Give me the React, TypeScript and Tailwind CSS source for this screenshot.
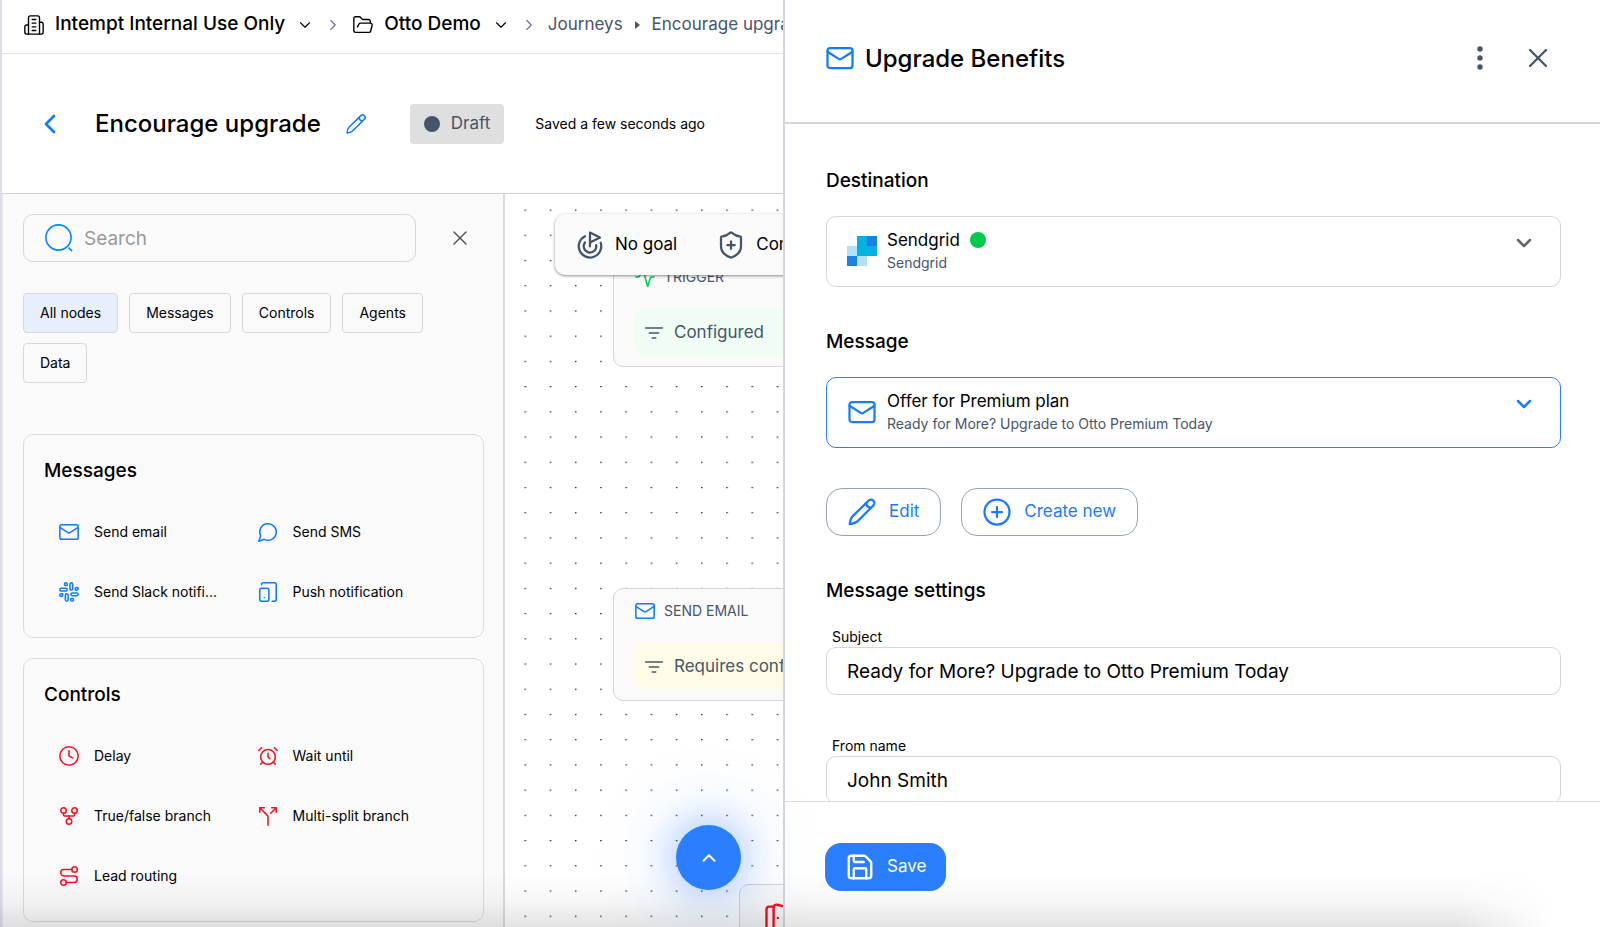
import { useState } from 'react'
import type { ReactNode } from 'react'
import {
  Activity,
  AlarmClock,
  ChevronDown,
  ChevronLeft,
  ChevronRight,
  ChevronUp,
  CirclePlus,
  Clock,
  DoorOpen,
  FolderOpen,
  GitFork,
  Goal,
  Route,
  Save,
  ShieldPlus,
  Slack,
  Split,
  TabletSmartphone,
  X,
} from 'lucide-react'

type IconProps = { size?: number; strokeWidth?: number; className?: string }

function Svg({ size = 24, strokeWidth = 2, className, children }: IconProps & { children: ReactNode }) {
  return (
    <svg
      width={size}
      height={size}
      viewBox="0 0 24 24"
      fill="none"
      stroke="currentColor"
      strokeWidth={strokeWidth}
      strokeLinecap="round"
      strokeLinejoin="round"
      className={className}
      aria-hidden="true"
    >
      {children}
    </svg>
  )
}

const MailIcon = (props: IconProps) => (
  <Svg {...props}>
    <rect width="20" height="16" x="2" y="4" rx="2" />
    <path d="m2 7 8.97 5.7a1.94 1.94 0 0 0 2.06 0L22 7" />
  </Svg>
)

const ChatIcon = (props: IconProps) => (
  <Svg {...props}>
    <path d="M7.9 20A9 9 0 1 0 4 16.1L2 22Z" />
  </Svg>
)

const BuildingIcon = (props: IconProps) => (
  <Svg {...props}>
    <path d="M6 22V4a2 2 0 0 1 2-2h8a2 2 0 0 1 2 2v18Z" />
    <path d="M6 12H4a2 2 0 0 0-2 2v6a2 2 0 0 0 2 2h2" />
    <path d="M18 9h2a2 2 0 0 1 2 2v9a2 2 0 0 1-2 2h-2" />
    <path d="M10 6h4M10 10h4M10 14h4M10 18h4" />
  </Svg>
)

const PencilIcon = (props: IconProps) => (
  <Svg {...props}>
    <path d="M17.3 2.9a2.65 2.65 0 0 1 3.8 3.8L8.6 19.3c-1.4 1.4-3.6 2-6.4 2.5.3-2.9.9-5 2.4-6.5z" />
    <path d="M15.4 4.9c.1 2 1.6 3.6 3.7 3.8" />
  </Svg>
)

const FilterIcon = (props: IconProps) => (
  <Svg {...props}>
    <path d="M2 6h20M6.500 12h11M10 18h4" />
  </Svg>
)

const SearchIcon = () => (
  <svg width="30" height="30" viewBox="0 0 30 30" fill="none" stroke="#0d83ff" strokeWidth="1.6" aria-hidden="true">
    <circle cx="14.500" cy="14.500" r="12.600" />
    <path d="m24.500 24.700 3.600 3.400" />
  </svg>
)

const SendgridLogo = () => (
  <svg width="30" height="30" viewBox="0 0 30 30" aria-hidden="true">
    <path fill="#b3e1f5" d="M0 10h10v10H0zM10 20h10v10H10z" />
    <path fill="#1a82e2" d="M0 20h10v10H0z" />
    <path fill="#00b2e3" d="M10 0h10v10h10v10H10z" />
    <path fill="#1a82e2" d="M20 0h10v10H20z" />
  </svg>
)

const filters = ['All nodes', 'Messages', 'Controls', 'Agents', 'Data']

const nodeGroups = [
  {
    title: 'Messages',
    color: 'text-[#0f7bff]',
    items: [
      { icon: MailIcon, label: 'Send email' },
      { icon: ChatIcon, label: 'Send SMS' },
      { icon: Slack, label: 'Send Slack notifi...' },
      { icon: TabletSmartphone, label: 'Push notification' },
    ],
  },
  {
    title: 'Controls',
    color: 'text-[#fb0f1f]',
    items: [
      { icon: Clock, label: 'Delay' },
      { icon: AlarmClock, label: 'Wait until' },
      { icon: GitFork, label: 'True/false branch' },
      { icon: Split, label: 'Multi-split branch' },
      { icon: Route, label: 'Lead routing' },
    ],
  },
]

function Breadcrumbs() {
  return (
    <nav
      aria-label="Breadcrumb"
      className="flex h-[54px] shrink-0 items-center overflow-hidden border-b border-[#e2e5ec] pb-1 pl-[21px] whitespace-nowrap"
    >
      <button className="flex items-center text-[19px] font-medium">
        <BuildingIcon size={22} strokeWidth={1.5} className="mr-2.5" />
        Intempt Internal Use Only
        <ChevronDown size={18} strokeWidth={1.5} className="ml-[11px]" />
      </button>
      <ChevronRight size={18} strokeWidth={1.5} className="mx-2.5 shrink-0 text-[#64748b]" />
      <button className="flex items-center text-[19px] font-medium">
        <FolderOpen size={22} strokeWidth={1.5} className="mr-2.5" />
        Otto Demo
        <ChevronDown size={18} strokeWidth={1.5} className="ml-[11px]" />
      </button>
      <ChevronRight size={18} strokeWidth={1.5} className="mx-2.5 shrink-0 text-[#64748b]" />
      <a href="#journeys" className="text-[17px] text-[#475569]">
        Journeys
      </a>
      <svg width="5" height="8" viewBox="0 0 5 8" className="mx-3 shrink-0" aria-hidden="true">
        <path d="M0 0l5 4-5 4z" fill="#555" />
      </svg>
      <span className="text-[17px] text-[#475569]">Encourage upgrade</span>
    </nav>
  )
}

function JourneyHeader() {
  return (
    <header className="flex h-[140px] shrink-0 items-center overflow-hidden border-b border-[#cbd0d9] pl-8 whitespace-nowrap">
      <button aria-label="Back" className="text-[#0f7bff]">
        <ChevronLeft size={32} strokeWidth={2} />
      </button>
      <h1 className="ml-[29px] text-2xl font-medium">Encourage upgrade</h1>
      <button aria-label="Rename journey" className="ml-6 text-[#0f7bff]">
        <PencilIcon size={22} strokeWidth={1.7} />
      </button>
      <span className="ml-[43px] flex h-10 items-center gap-[11px] rounded bg-[#dfdfdf] px-3.5 text-[17px] text-[#475569]">
        <span className="size-4 rounded-full bg-[#44546a]" />
        Draft
      </span>
      <span className="ml-[31px] text-sm">Saved a few seconds ago</span>
    </header>
  )
}

function NodeLibrary() {
  const [active, setActive] = useState('All nodes')

  return (
    <aside className="w-[503px] shrink-0 overflow-hidden border-r-2 border-l border-r-[#d9dce2] border-l-[#e8eaf0] bg-[#fafafa] pt-5 pr-[19px] pl-5">
      <div className="flex items-center">
        <label className="flex h-12 w-[393px] items-center gap-2.5 rounded-[10px] border border-[#d6d6d6] pl-5">
          <SearchIcon />
          <input
            type="search"
            placeholder="Search"
            aria-label="Search nodes"
            className="min-w-0 flex-1 bg-transparent pt-0.5 text-[19px] outline-none placeholder:text-[#9b9b9b]"
          />
        </label>
        <button aria-label="Close node list" className="ml-8 text-[#555]">
          <X size={24} strokeWidth={1.5} />
        </button>
      </div>

      <div className="mt-[31px] flex flex-wrap gap-x-[11px] gap-y-2.5">
        {filters.map((filter) => (
          <button
            key={filter}
            onClick={() => setActive(filter)}
            className={`h-10 rounded border border-[#d9d9d9] px-4 text-sm ${
              active === filter ? 'bg-[#e8effc]' : ''
            }`}
          >
            {filter}
          </button>
        ))}
      </div>

      <div className="mt-[51px] flex flex-col gap-5">
        {nodeGroups.map((group) => (
          <section key={group.title} className="rounded-[10px] border border-[#dcdcdc] px-5 pt-[21px] pb-[15px]">
            <h2 className="mb-4 text-[19px] leading-[30px] font-medium">{group.title}</h2>
            <ul className="grid grid-cols-2 pr-[22px]">
              {group.items.map((item) => {
                const Icon = item.icon
                return (
                  <li key={item.label}>
                    <button className="flex h-[60px] w-full items-center gap-3.5 pl-3.5 text-left text-sm whitespace-nowrap">
                      <Icon size={22} strokeWidth={1.7} className={`shrink-0 ${group.color}`} />
                      {item.label}
                    </button>
                  </li>
                )
              })}
            </ul>
          </section>
        ))}
      </div>
    </aside>
  )
}

function CanvasNode({
  icon,
  title,
  status,
  tone,
  className,
}: {
  icon: ReactNode
  title: string
  status: string
  tone: string
  className: string
}) {
  return (
    <div
      className={`absolute w-[340px] rounded-[10px] border border-[#d6d6d6] bg-[#fafafa] px-5 pb-[11px] whitespace-nowrap ${className}`}
    >
      <div className="flex h-[53px] items-center gap-2 pb-2.5 text-sm text-[#475569]">
        {icon}
        {title}
      </div>
      <div className={`flex h-[47px] items-center gap-2.5 rounded-[10px] pt-0.5 pl-2.5 text-[17px] text-[#475569] ${tone}`}>
        <FilterIcon size={20} strokeWidth={2} />
        {status}
      </div>
    </div>
  )
}

function Canvas() {
  return (
    <main className="relative min-w-0 flex-1 overflow-hidden bg-white">
      <svg className="absolute inset-0 size-full" aria-hidden="true">
        <pattern id="dots" width="25.22" height="25.22" patternUnits="userSpaceOnUse" x="19.500" y="15.500">
          <rect width="1.500" height="1.200" fill="#222" />
        </pattern>
        <rect width="100%" height="100%" fill="url(#dots)" />
      </svg>

      <CanvasNode
        className="top-[60px] left-[108px]"
        icon={<Activity size={22} strokeWidth={1.7} className="text-[#00c950]" />}
        title="TRIGGER"
        status="Configured"
        tone="bg-[#effdf4]"
      />
      <CanvasNode
        className="top-[394px] left-[108px]"
        icon={<MailIcon size={22} strokeWidth={1.7} className="text-[#0f7bff]" />}
        title="SEND EMAIL"
        status="Requires configuration"
        tone="bg-[#fefbe6]"
      />
      <div className="absolute top-[690px] left-[234px] h-[120px] w-[220px] rounded-[10px] border border-[#d6d6d6] bg-[#fafafa] pt-4 pl-[18px]">
        <DoorOpen size={34} strokeWidth={1.7} className="text-[#fb0f1f]" />
      </div>

      <div className="absolute top-5 left-[50px] flex h-[61px] items-center gap-[39px] rounded-[10px] bg-[#fafafa] px-5 pt-px text-[17px] whitespace-nowrap shadow-[0_1px_3px_rgba(0,0,0,0.45)]">
        <button className="flex items-center gap-2.5">
          <Goal size={30} strokeWidth={1.8} className="text-[#44546a]" />
          No goal
        </button>
        <button className="flex items-center gap-2.5">
          <ShieldPlus size={30} strokeWidth={1.8} className="text-[#44546a]" />
          Conditions
        </button>
      </div>
    </main>
  )
}

function PickerButton({
  icon,
  title,
  subtitle,
  online,
  selected,
}: {
  icon: ReactNode
  title: string
  subtitle: string
  online?: boolean
  selected?: boolean
}) {
  return (
    <button
      aria-haspopup="listbox"
      className={`flex h-[71px] w-full items-center gap-2.5 rounded-[10px] border pr-6 pb-px pl-5 text-left ${
        selected ? 'border-[#2b7fff]' : 'border-[#d6d6d6]'
      }`}
    >
      <span className="flex size-[30px] items-center justify-center">{icon}</span>
      <span className="flex-1">
        <span className="flex items-center gap-2.5 text-[17px] leading-6">
          {title}
          {online && <span className="size-4 rounded-full bg-[#00c950]" />}
        </span>
        <span className="block text-sm leading-[22px] text-[#475569]">{subtitle}</span>
      </span>
      <ChevronDown size={24} strokeWidth={2.5} className={`mb-4 ${selected ? 'text-[#1a7bff]' : 'text-[#666]'}`} />
    </button>
  )
}

function Field({ id, label, value }: { id: string; label: string; value: string }) {
  return (
    <div>
      <label htmlFor={id} className="block pl-1.5 text-sm leading-[21px]">
        {label}
      </label>
      <input
        id={id}
        type="text"
        defaultValue={value}
        className="h-12 w-full rounded-[10px] border border-[#d6d6d6] px-5 text-[19px] outline-none"
      />
    </div>
  )
}

function MessagePanel() {
  return (
    <section className="flex w-[calc(51%+1px)] shrink-0 flex-col border-l-2 border-[#d5d8df] bg-white">
      <header className="flex shrink-0 items-center border-b-2 border-[#d3d6df] pt-10 pr-[46px] pb-[46px] pl-10">
        <MailIcon size={30} strokeWidth={1.8} className="text-[#0f7bff]" />
        <h2 className="ml-2.5 flex-1 pt-0.5 text-2xl leading-[34px] font-medium">Upgrade Benefits</h2>
        <button aria-label="More options" className="text-[#44546a]">
          <svg width="30" height="30" viewBox="0 0 30 30" fill="currentColor" aria-hidden="true">
            <circle cx="15" cy="6" r="2.700" />
            <circle cx="15" cy="15" r="2.700" />
            <circle cx="15" cy="24" r="2.700" />
          </svg>
        </button>
        <button aria-label="Close panel" className="ml-[27px] text-[#44546a]">
          <X size={32} strokeWidth={1.7} />
        </button>
      </header>

      <div className="min-h-0 flex-1 overflow-hidden pt-[42px] pr-[39px] pl-[41px]">
        <h3 className="mb-5 text-[19px] leading-[30px] font-medium">Destination</h3>
        <PickerButton icon={<SendgridLogo />} title="Sendgrid" subtitle="Sendgrid" online />

        <h3 className="mt-10 mb-5 text-[19px] leading-[30px] font-medium">Message</h3>
        <PickerButton
          icon={<MailIcon size={30} strokeWidth={1.8} className="text-[#1a7bff]" />}
          title="Offer for Premium plan"
          subtitle="Ready for More? Upgrade to Otto Premium Today"
          selected
        />

        <div className="mt-10 flex gap-5">
          <button className="flex h-12 items-center gap-3 rounded-2xl border border-[#94a3b8] pr-[21px] pl-5 text-[17px] text-[#1a7bff]">
            <PencilIcon size={30} strokeWidth={1.8} />
            Edit
          </button>
          <button className="flex h-12 items-center gap-3 rounded-2xl border border-[#94a3b8] pr-[21px] pl-5 text-[17px] text-[#1a7bff]">
            <CirclePlus size={30} strokeWidth={1.8} />
            Create new
          </button>
        </div>

        <h3 className="mt-10 mb-5 text-[19px] leading-[30px] font-medium">Message settings</h3>
        <div className="flex flex-col gap-10">
          <Field id="subject" label="Subject" value="Ready for More? Upgrade to Otto Premium Today" />
          <Field id="from-name" label="From name" value="John Smith" />
        </div>
      </div>

      <footer className="shrink-0 border-t border-[#dcdcdc] pt-[41px] pb-9 pl-10">
        <button className="flex h-12 items-center gap-3 rounded-2xl bg-[#2b7fff] pr-5 pl-5 text-[17px] text-white">
          <Save size={30} strokeWidth={1.9} />
          Save
        </button>
      </footer>
    </section>
  )
}

export default function App() {
  return (
    <div className="relative flex h-screen overflow-hidden bg-white font-['Inter','Liberation_Sans',sans-serif] text-black">
      <div className="flex min-w-0 flex-1 flex-col border-l-2 border-[#dcdfe8]">
        <Breadcrumbs />
        <JourneyHeader />
        <div className="flex min-h-0 flex-1">
          <NodeLibrary />
          <Canvas />
        </div>
      </div>
      <MessagePanel />

      <button
        aria-label="Expand"
        className="absolute bottom-[37px] left-[676px] flex size-[65px] items-center justify-center rounded-full bg-[#2b7fff] text-white shadow-[0_0_45px_rgba(43,127,255,0.5),0_0_80px_30px_rgba(43,127,255,0.06)]"
      >
        <ChevronUp size={22} strokeWidth={2.2} />
      </button>

      {/* bottom fade */}
      <div className="pointer-events-none absolute inset-x-0 bottom-0 h-[54px] bg-linear-to-b from-transparent via-black/3 to-black/11 [mask-image:linear-gradient(to_right,black_91%,transparent_97%)]" />
    </div>
  )
}
